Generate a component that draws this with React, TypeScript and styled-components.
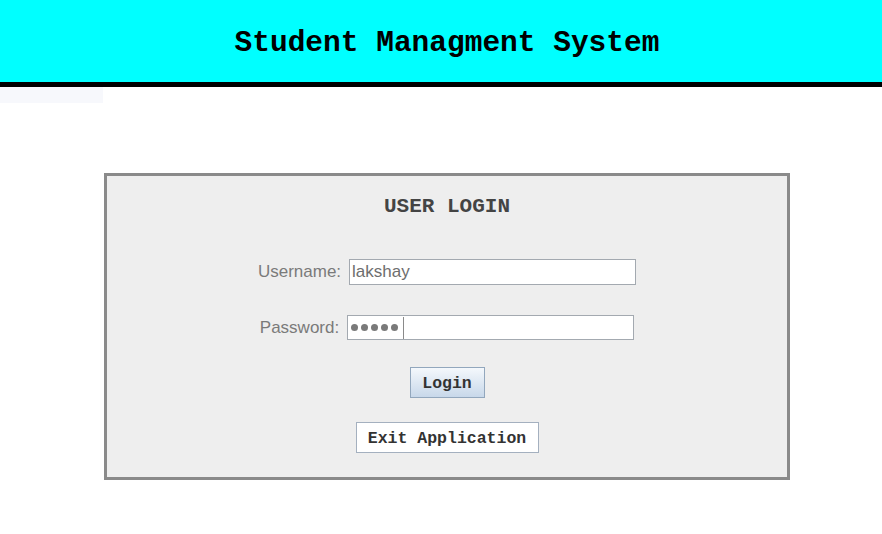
import React from 'react'
import styled, { createGlobalStyle } from 'styled-components'

const GlobalStyle = createGlobalStyle`
  html, body {
    margin: 0;
    padding: 0;
    background: #ffffff;
  }
  body {
    font-family: "Liberation Sans", Arial, sans-serif;
  }
`

const Page = styled.div`
  width: 882px;
  height: 534px;
  overflow: hidden;
  background: #ffffff;
`

const Header = styled.header`
  height: 87px;
  background: #00ffff;
  border-bottom: 5px solid #000000;
  display: flex;
  align-items: center;
  justify-content: center;
  padding: 4px 0 0 12px;
  box-sizing: border-box;
`

const Title = styled.h1`
  margin: 0;
  font-family: "Liberation Mono", "Courier New", monospace;
  font-weight: bold;
  font-size: 29.5px;
  color: #000000;
`

// 左上に残っているキャプチャ時のツールチップの名残
const SnipGhost = styled.div`
  width: 103px;
  height: 16px;
  background: #f7f8fc;
`

const Panel = styled.section`
  width: 686px;
  margin: 70px 0 0 104px;
  box-sizing: border-box;
  border: 3px solid #8a8a8a;
  background: #eeeeee;
  display: flex;
  flex-direction: column;
  align-items: center;
  padding: 19px 0 24px 0;
`

const PanelTitle = styled.h2`
  margin: 0;
  height: 24px;
  line-height: 24px;
  font-family: "Liberation Mono", "Courier New", monospace;
  font-weight: bold;
  font-size: 21px;
  color: #444444;
`

const Row = styled.div<{ $top: number }>`
  display: flex;
  align-items: center;
  gap: 8px;
  margin-top: ${p => p.$top}px;
`

const Label = styled.label`
  font-size: 17px;
  color: #7a7a7a;
`

const Field = styled.div<{ $w: number; $h: number }>`
  width: ${p => p.$w}px;
  height: ${p => p.$h}px;
  box-sizing: border-box;
  border: 1px solid #a3a9b0;
  background: #ffffff;
  display: flex;
  align-items: center;
  padding-left: 2px;
  font-size: 17px;
  color: #6e6e6e;
`

const Dots = styled.div`
  display: flex;
  gap: 3px;
  padding-left: 1px;
`

const Dot = styled.span`
  width: 7px;
  height: 7px;
  border-radius: 50%;
  background: #7a7a7a;
`

const Caret = styled.span`
  width: 1px;
  height: 22px;
  margin-left: 5px;
  background: #8a8a8a;
`

const Button = styled.button<{ $primary?: boolean; $top: number; $w: number }>`
  margin-top: ${p => p.$top}px;
  width: ${p => p.$w}px;
  height: 31px;
  box-sizing: border-box;
  padding: 2px 0 0 0;
  font-family: "Liberation Mono", "Courier New", monospace;
  font-weight: bold;
  font-size: 16.5px;
  color: #333333;
  cursor: pointer;
  border: 1px solid ${p => (p.$primary ? '#92a7bd' : '#a4b0bf')};
  background: ${p =>
    p.$primary ? 'linear-gradient(#f4f8fc, #c8d8ea)' : '#ffffff'};
`

export default function App() {
  return (
    <Page>
      <GlobalStyle />
      <Header>
        <Title>Student Managment System</Title>
      </Header>
      <SnipGhost />
      <Panel>
        <PanelTitle>USER LOGIN</PanelTitle>
        <Row $top={40}>
          <Label>Username:</Label>
          <Field $w={287} $h={26}>lakshay</Field>
        </Row>
        <Row $top={30}>
          <Label>Password:</Label>
          <Field $w={287} $h={25}>
            <Dots>
              {[0, 1, 2, 3, 4].map(i => (
                <Dot key={i} />
              ))}
            </Dots>
            <Caret />
          </Field>
        </Row>
        <Button $primary $top={27} $w={75}>Login</Button>
        <Button $top={24} $w={183}>Exit Application</Button>
      </Panel>
    </Page>
  )
}
